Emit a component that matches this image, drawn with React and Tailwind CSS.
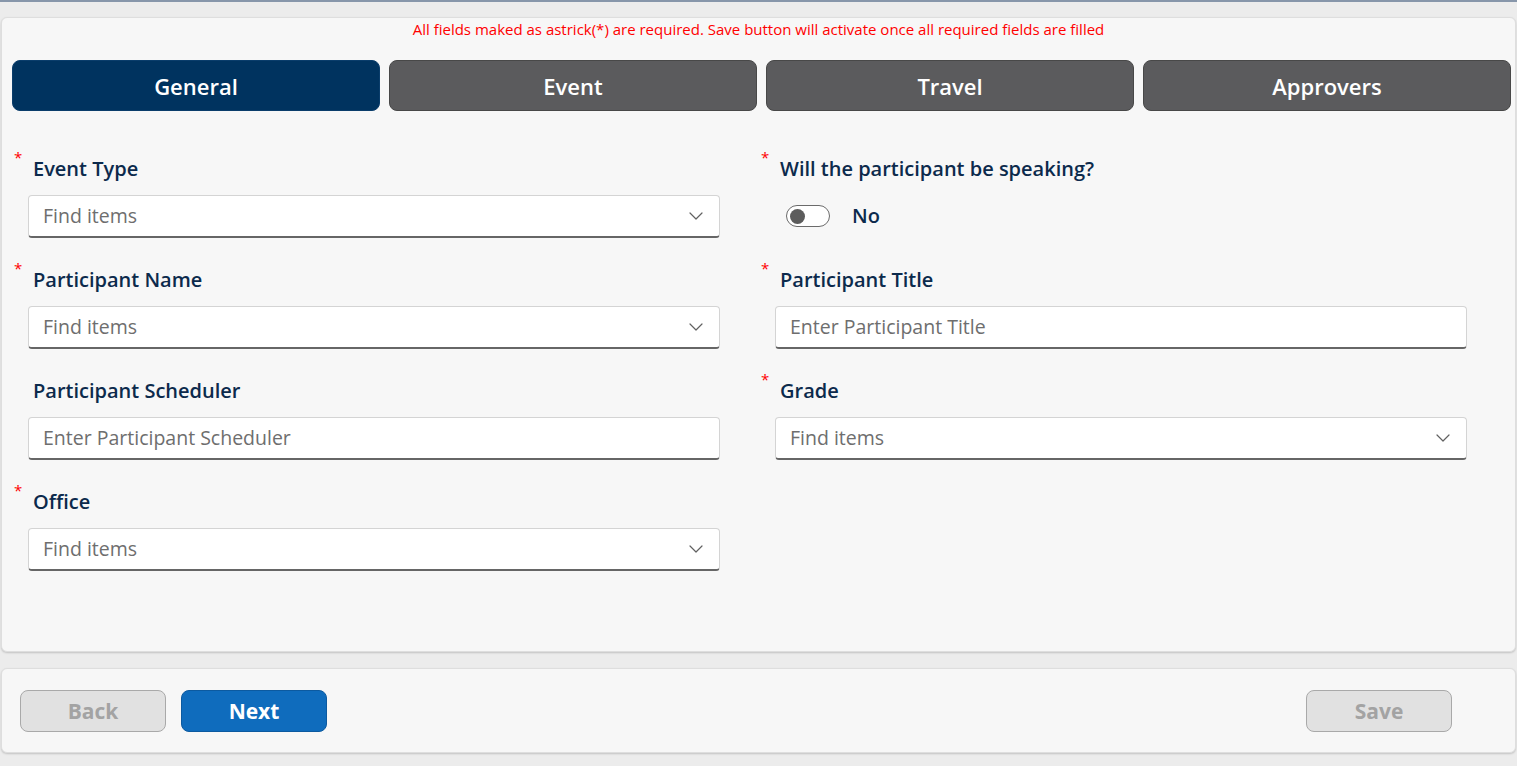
import React from 'react';

const TABS = ['General', 'Event', 'Travel', 'Approvers'];

const font = "font-['Open_Sans','Liberation_Sans',sans-serif]";

function Chevron() {
  return (
    <svg width="14" height="8" viewBox="0 0 14 8" fill="none" className="shrink-0">
      <path d="M1 1l6 6 6-6" stroke="#616161" strokeWidth="1.2" strokeLinecap="round" strokeLinejoin="round" />
    </svg>
  );
}

function Label({ text, required }) {
  return (
    <div className="flex h-[27px] items-center">
      <span className="w-[21px] self-start -mt-[5px] pl-[2px] text-[15px] leading-none text-[#ff0000]">
        {required ? '*' : ''}
      </span>
      <span className="text-[20px] font-semibold text-[#0c2a4c] leading-[27px]">{text}</span>
    </div>
  );
}

function Field({ label, required, placeholder, dropdown }) {
  return (
    <div className="h-[111px]">
      <Label text={label} required={required} />
      <div className="ml-[16px] mt-[13px] flex h-[43px] w-[692px] items-center justify-between rounded-[4px] border border-[#d4d4d4] border-b-[#666] border-b-2 bg-white pl-[14px] pr-[16px]">
        <span className="text-[19.5px] text-[#6e6e6e]">{placeholder}</span>
        {dropdown && <Chevron />}
      </div>
    </div>
  );
}

function ToggleField() {
  return (
    <div className="h-[111px]">
      <Label text="Will the participant be speaking?" required />
      <div className="mt-[19px] flex items-center pl-[27px]">
        <div className="flex h-[22px] w-[44px] items-center rounded-full border border-[#6b6b6b] bg-white px-[3px]">
          <div className="h-[15px] w-[15px] rounded-full bg-[#5c5c5c]" />
        </div>
        <span className="ml-[22px] text-[20px] font-semibold text-[#0c2a4c]">No</span>
      </div>
    </div>
  );
}

function Button({ children, variant }) {
  const styles = {
    disabled: 'bg-[#e1e1e1] border-[#a9a9a9] text-[#a3a3a3]',
    primary: 'bg-[#0f6cbd] border-[#0c5aa0] text-white',
  };
  return (
    <button className={`h-[42px] w-[146px] rounded-[8px] border pt-[3px] text-[21px] font-bold ${styles[variant]}`}>
      {children}
    </button>
  );
}

export default function App() {
  return (
    <div className={`min-h-screen border-t-2 border-[#8796aa] bg-[#ececec] pt-[15px] ${font}`}>
      <div className="mx-[1px] h-[635px] rounded-[6px] border border-[#dedede] bg-[#f7f7f7] shadow-[0_1px_2px_rgba(0,0,0,0.18)]">
        <p className="pt-[2px] text-center text-[15px] leading-[18px] text-[#ff0000]">
          All fields maked as astrick(*) are required. Save button will activate once all required fields are filled
        </p>

        <div className="mt-[22px] grid grid-cols-4 gap-[9px] pl-[10px] pr-[4px]">
          {TABS.map((t, i) => (
            <div
              key={t}
              className={`flex h-[51px] items-center justify-center rounded-[8px] border pt-[2px] text-[22px] font-semibold text-white ${
                i === 0 ? 'bg-[#00335f] border-[#0a3d6b]' : 'bg-[#5b5b5d] border-[#484848]'
              }`}
            >
              {t}
            </div>
          ))}
        </div>

        <div className="mt-[44px] grid grid-cols-[747px_1fr] pl-[10px]">
          <div>
            <Field label="Event Type" required placeholder="Find items" dropdown />
            <Field label="Participant Name" required placeholder="Find items" dropdown />
            <Field label="Participant Scheduler" placeholder="Enter Participant Scheduler" />
            <Field label="Office" required placeholder="Find items" dropdown />
          </div>
          <div>
            <ToggleField />
            <Field label="Participant Title" required placeholder="Enter Participant Title" />
            <Field label="Grade" required placeholder="Find items" dropdown />
          </div>
        </div>
      </div>

      <div className="mx-[1px] mt-[16px] flex h-[85px] items-center justify-between rounded-[6px] border border-[#dedede] bg-[#f7f7f7] pl-[18px] pr-[63px] shadow-[0_1px_2px_rgba(0,0,0,0.18)]">
        <div className="flex gap-[15px]">
          <Button variant="disabled">Back</Button>
          <Button variant="primary">Next</Button>
        </div>
        <Button variant="disabled">Save</Button>
      </div>
    </div>
  );
}
